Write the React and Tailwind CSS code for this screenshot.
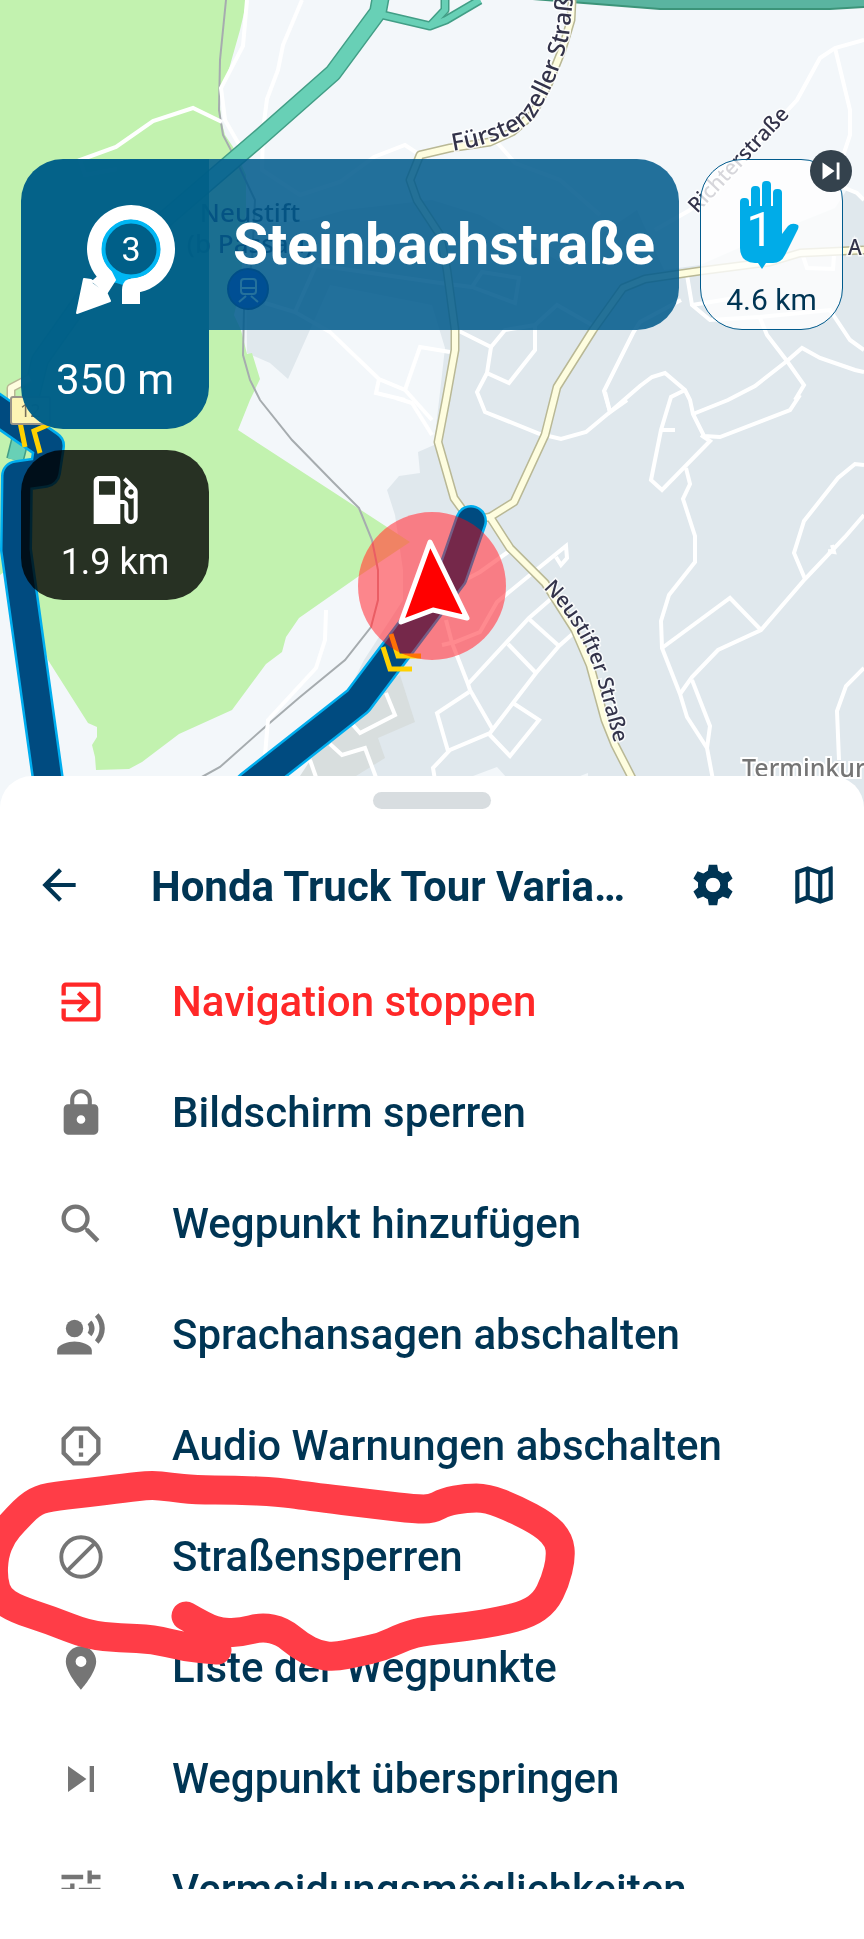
import React from 'react';
import {
  MdArrowBack,
  MdOutlineMap,
  MdExitToApp,
  MdLock,
  MdSearch,
  MdRecordVoiceOver,
  MdReportGmailerrorred,
  MdPlace,
  MdSkipNext,
  MdTune,
  MdLocalGasStation,
} from 'react-icons/md';

const BlockIcon = ({ size = 24, className }) => (
  <svg width={size} height={size} viewBox="0 0 24 24" fill="none" stroke="currentColor" strokeWidth="1.8" className={className}>
    <circle cx="12" cy="12" r="9.1" />
    <path d="M5.6 18.4 18.4 5.6" />
  </svg>
);

const GearIcon = ({ size = 24 }) => (
  <svg width={size} height={size} viewBox="0 0 24 24" fill="currentColor">
    <circle cx="12" cy="12" r="5.3" fill="none" stroke="currentColor" strokeWidth="3.6" />
    {[0, 60, 120, 180, 240, 300].map((angle) => (
      <path key={angle} transform={`rotate(${angle} 12 12)`} d="M10 2.3H14L14.5 5.2 16 6.2 14 8.4H10L8 6.2 9.5 5.2Z" />
    ))}
  </svg>
);

const menuItems = [
  { label: 'Navigation stoppen', icon: MdExitToApp, danger: true },
  { label: 'Bildschirm sperren', icon: MdLock },
  { label: 'Wegpunkt hinzufügen', icon: MdSearch },
  { label: 'Sprachansagen abschalten', icon: MdRecordVoiceOver },
  { label: 'Audio Warnungen abschalten', icon: MdReportGmailerrorred },
  { label: 'Straßensperren', icon: BlockIcon },
  { label: 'Liste der Wegpunkte', icon: MdPlace },
  { label: 'Wegpunkt überspringen', icon: MdSkipNext },
  { label: 'Vermeidungsmöglichkeiten', icon: MdTune },
];

const streets = [
  'M247 0 243 46 221 88 225 120 241 148',
  'M222 122 193 108 153 121 116 147 80 160 85 175 117 169',
  'M302 0 283 45 278 70 267 99 263 130 262 170 300 195 340 182 374 157 405 145 420 155',
  'M265 303 295 312 330 332 379 379 405 390 432 420',
  'M379 379 376 393 405 400',
  'M405 390 420 347 450 352',
  'M295 312 316 265 440 283 472 287 482 272 519 278 515 303 472 287',
  'M495 140 515 163 560 180 600 215',
  'M457 330 491 347 505 330 535 325 557 305 592 325',
  'M535 325 535 350 509 383 487 373 491 347',
  'M487 373 477 392 485 412 540 434 561 439 586 432 610 412 627 400',
  'M605 392 610 412',
  'M864 40 835 48 820 58 797 100 785 113 725 180 690 210 655 230',
  'M835 48 850 110 850 135 840 165 845 188 857 193 864 200',
  'M681 300 640 322 633 333 604 391 610 412 640 386 652 377 665 373 685 390 690 400 693 414 704 436 720 437 790 410 800 395',
  'M685 390 671 397 661 430 651 480 662 490 710 441 701 435',
  'M661 430 675 430',
  'M693 414 728 400 755 386 787 361 802 348 820 358 855 370 864 372',
  'M687 275 692 305 710 320 760 317 830 310 850 340 864 350',
  'M760 318 767 335 787 361 804 385 795 400',
  'M692 305 735 298',
  'M803 256 807 268 833 269 834 256',
  'M686 468 690 484 683 499 695 536 695 562 669 595 661 621 662 648 680 694 687 717 707 748 713 780',
  'M662 648 730 598 761 630',
  'M680 694 692 677 718 650 761 630 805 579 845 537 864 515',
  'M805 579 794 553 804 521 838 478 855 464 864 465',
  'M692 680 710 726 707 748',
  'M828 551 834 552 832 545',
  'M864 668 846 686 837 711 839 760',
  'M508 552 480 572 465 580',
  'M442 645 455 642 480 632 497 602 530 575 566 546 567 558 561 565 556 557',
  'M552 598 529 618 468 684',
  'M529 619 559 646',
  'M508 644 536 673',
  'M577 630 559 646 536 673 513 703 490 733 450 750 433 768 435 780',
  'M513 703 539 720 510 756 489 734',
  'M446 620 452 643 468 684 470 690 493 730',
  'M469 692 437 713 448 751',
  'M326 610 325 640 316 668 268 720 265 755',
  'M386 693 395 715 360 733 353 725',
  'M330 744 342 755 365 748 377 780',
  'M310 760 317 780',
  'M396 398 412 403 432 435',
];

const yellowRoads = [
  'M572 0 571 20 562 50 548 85 532 115 512 132 490 142 450 148 420 155 410 180 417 200 440 235 447 270 455 330 455 350 446 400 438 442 454 498 470 520 490 517 510 548 545 583 575 630 590 665 605 720 615 745 633 780',
  'M864 250 800 253 770 262 700 271 645 279 623 288 593 330 557 387 545 435 514 502 490 517',
  'M11 400 11 388 30 378',
];

const greenRoads = [
  'M383 15 430 26 446 20 480 0',
  'M430 26 445 10 445 0',
];

const routes = [
  'M-20 398 49 446 45 472 17 476 16 550 48 780',
  'M471 521 452 576 358 701 250 786',
];

// Quadratic smoothing through the midpoints of the given points
const smooth = (points) => {
  let d = `M${points[0][0]} ${points[0][1]}`;
  for (let i = 1; i < points.length - 1; i++) {
    const [x, y] = points[i];
    const [nx, ny] = points[i + 1];
    d += ` Q${x} ${y} ${(x + nx) / 2} ${(y + ny) / 2}`;
  }
  const last = points[points.length - 1];
  return `${d} L${last[0]} ${last[1]}`;
};

const markerPoints = [
  [186, 156], [205, 167], [222, 173], [242, 172], [262, 167], [282, 171], [300, 186], [318, 195], [335, 197], [358, 192], [382, 187], [405, 176],
  [425, 171], [465, 167], [501, 161], [528, 154], [545, 142], [555, 122], [561, 98], [559, 80], [545, 65], [515, 49],
  [487, 38], [466, 38], [445, 42], [432, 49], [415, 49], [380, 45], [306, 36], [279, 32], [235, 30], [195, 30], [170, 27], [151, 25],
  [125, 28], [85, 33], [48, 37], [32, 43], [15, 60], [2, 75], [-6, 95], [-7, 120], [-1, 138], [16, 149], [50, 160], [88, 175],
  [120, 178], [153, 179], [184, 187], [217, 190],
];

const MapView = () => (
  <svg viewBox="0 0 864 808" preserveAspectRatio="xMidYMin slice" className="w-full h-full block bg-[#f3f7fa]" role="img" aria-label="Karte">
    <path fill="#e0e8ed" d="M246 225 310 220 345 210 432 200 480 215 560 262 637 210 664 270 700 265 780 230 835 208 848 188 864 200V808H290L364 660 403 600 403 570 395 515 387 490 399 476 420 473 418 452 434 445 445 348 432 305 330 285 288 379 270 363 247 353Z" />
    <path fill="#d8dede" d="M350 700 400 675 415 722 378 738 385 758 356 776H300Z" />
    <path fill="#f3f7fa" d="M473 776 497 767 507 778ZM575 778 588 773V780Z" />
    <path fill="#c2f2af" d="M0 0H247L240 30 227 76 219 93 221 120 225 135 235 150 246 175 246 210 240 290 234 315 241 330 247 354 252 353 260 379 250 400 238 430 410 542 359 576 299 618 286 637 282 652 266 664 232 710 179 734 142 762 129 769 96 770 95 757 92 745 97 737 97 727 88 723 48 660 20 560 0 575Z" />
    <path fill="none" stroke="#a6acaf" strokeWidth="2" d="M226 0 220 60 219 110 223 135 235 158 255 200 252 260 244 310 243 355 250 380 260 400 292 440 333 482 359 508 372 540 378 570 378 600 371 627 345 660 300 697 265 727 220 767 200 778" />

    <g fill="none" stroke="#ffffff" strokeWidth="4">
      {streets.map((d) => <path key={d} d={d} />)}
    </g>

    <g fill="none" strokeLinejoin="round">
      <path stroke="#429e86" strokeWidth="18" d="M382-10 378 12 333 73 257 140 100 275 40 360 15 460" />
      {greenRoads.map((d) => <path key={d} stroke="#429e86" strokeWidth="9" d={d} />)}
      <path stroke="#68d0b6" strokeWidth="15" d="M382-10 378 12 333 73 257 140 100 275 40 360 15 460" />
      {greenRoads.map((d) => <path key={d} stroke="#68d0b6" strokeWidth="6" d={d} />)}
    </g>
    <path fill="#5ab4a0" stroke="#3c9479" strokeWidth="2" d="M520-2 660 9 830 9 866 7V-2Z" />

    <g fill="none" strokeLinejoin="round">
      {yellowRoads.map((d) => <path key={d} stroke="#b9b895" strokeWidth="9" d={d} />)}
      {yellowRoads.map((d) => <path key={d} stroke="#fefddf" strokeWidth="6" d={d} />)}
    </g>

    <defs>
      <path id="fuerstenzeller" d="M453 151 Q512 141 534 118 Q558 82 569 35 L577 -40" />
      <path id="richter" d="M697 214 806 98" />
      <path id="neustifter" d="M543 588 Q583 628 598 682 L619 760" />
    </defs>
    <g fill="#33334a" stroke="#ffffff" strokeOpacity="0.8" strokeWidth="3" paintOrder="stroke" className="font-['Noto_Sans',sans-serif] text-[21px] font-medium">
      <text className="text-[24px]"><textPath href="#fuerstenzeller">Fürstenzeller Straße</textPath></text>
      <text><textPath href="#richter">Richterstraße</textPath></text>
      <text><textPath href="#neustifter">Neustifter Straße</textPath></text>
      <text x="848" y="255">A</text>
    </g>
    <text x="742" y="777" fill="#757575" stroke="#ffffff" strokeWidth="4" paintOrder="stroke" className="font-['Noto_Sans',sans-serif] text-[25px] font-medium">Terminkurier</text>
    <g fill="#1d2c4c" textAnchor="middle" className="font-['Noto_Sans',sans-serif] text-[26px] font-medium">
      <text x="250" y="222">Neustift</text>
      <text x="250" y="253">(b Passau)</text>
    </g>
    <circle cx="248" cy="289" r="20" fill="#0010c8" stroke="#000a70" strokeWidth="2" />
    <g fill="none" stroke="#ffffff" strokeWidth="2">
      <rect x="241" y="279" width="15" height="15" rx="3" />
      <path d="M241 288H256M246 296 239 302M251 296 258 302" />
    </g>

    <circle cx="432" cy="586" r="74" fill="#900000" className="mix-blend-screen" />
    <g fill="none" strokeLinecap="round" strokeLinejoin="round">
      {routes.map((d) => <path key={d} stroke="#00aeef" strokeWidth="32" d={d} />)}
      {routes.map((d) => <path key={d} stroke="#004b80" strokeWidth="27" d={d} />)}
    </g>
    <g fill="none" stroke="#ffd100" strokeWidth="5">
      <path d="M383 647 390 669H412M391 634 398 656H421M20 422 25 447M50 424 34 431 40 453" />
    </g>
    <rect x="11" y="397" width="39" height="27" rx="2" fill="#fdf4b4" stroke="#99958a" strokeWidth="2" />
    <text x="20" y="417" fill="#77705a" className="font-['Noto_Sans',sans-serif] text-[18px]">12</text>

    <circle cx="432" cy="586" r="74" fill="#ff000a" fillOpacity="0.46" />
    <path d="M430 542 467 618 433 610 401 622Z" fill="#ff0000" stroke="#ffffff" strokeWidth="5" strokeLinejoin="round" />
  </svg>
);

const RoundaboutIcon = () => (
  <svg width="106" height="118" viewBox="0 0 106 118" aria-hidden="true">
    <path fill="#00b7f4" d="M38 70 60 76 52 85 42 82Z" />
    <path fill="none" stroke="#ffffff" strokeWidth="15" d="M60 85.5A36.5 36.5 0 1 0 34.2 74.8" />
    <path fill="#ffffff" d="M51 104V90Q51 79 62 78L69 90V104Z" />
    <path fill="#ffffff" stroke="#ffffff" strokeWidth="2" strokeLinejoin="round" d="M28 76 39 70 44 80 35 94 20 83ZM13 79 6 113 39 101 35 92 20 80Z" />
    <circle cx="60" cy="49" r="27.5" fill="#005f88" stroke="#00b7f4" strokeWidth="4" />
    <text x="60" y="61" textAnchor="middle" fill="#ffffff" className="font-[Roboto,sans-serif] text-[34px]">3</text>
  </svg>
);

const HandIcon = () => (
  <svg width="65" height="92" viewBox="0 0 65 92" aria-hidden="true">
    <g fill="#00ace8">
      <rect x="3" y="20" width="9" height="30" rx="4" />
      <rect x="14" y="8" width="9" height="40" rx="4" />
      <rect x="25" y="3" width="9" height="40" rx="4" />
      <rect x="36" y="11" width="9" height="40" rx="4" />
      <path d="M3 28H45V56L51 48Q55 44 61 47Q62 48 61 51L48 77Q44 85 36 85H29L25 91 21 85H18Q3 84 3 70Z" />
    </g>
    <text x="23" y="68" textAnchor="middle" fill="#ffffff" className="font-[Roboto,sans-serif] text-[49px]">1</text>
  </svg>
);

const GuidancePanel = () => (
  <div className="absolute top-[159px] inset-x-[21px] flex items-start text-white">
    <div className="w-[188px] flex flex-col gap-[21px]">
      <div className="h-[270px] rounded-[42px] rounded-tr-none bg-[#005f88]/98 pt-[41px] flex flex-col items-center">
        <div className="self-start ml-[50px]">
          <RoundaboutIcon />
        </div>
        <span className="mt-[38px] text-[42px] leading-[48px]">350 m</span>
      </div>
      <div className="h-[150px] rounded-[42px] bg-black/80 pt-[18px] flex flex-col items-center">
        <MdLocalGasStation size={64} />
        <span className="mt-[6px] text-[36px] leading-[48px]">1.9 km</span>
      </div>
    </div>
    <div className="flex-1 h-[171px] rounded-r-[42px] bg-[#005a8c]/86 flex items-center justify-center">
      <h1 className="text-[57px] leading-[64px] font-bold">Steinbachstraße</h1>
    </div>
    <div className="relative ml-[21px] w-[143px] h-[171px] rounded-[42px] border border-[#005a8c] bg-white/80 text-[#003554] pt-[18px] flex flex-col items-center">
      <div className="pr-1">
        <HandIcon />
      </div>
      <span className="mt-[14px] text-[30px] leading-8">4.6 km</span>
      <button type="button" aria-label="Wegpunkt überspringen" className="absolute -top-[10px] -right-[10px] size-[42px] rounded-full bg-[#34424d] text-white flex items-center justify-center">
        <MdSkipNext size={34} />
      </button>
    </div>
  </div>
);

const MenuSheet = () => (
  <section className="relative -mt-8 flex-1 min-h-0 flex flex-col rounded-t-[32px] bg-white pb-[50px] text-[#003554]">
    <div className="mt-4 mx-auto w-[118px] h-[17px] rounded-full bg-[#d8dde0]"></div>
    <header className="mt-[26px] h-[100px] shrink-0 flex items-center pl-[34px] pr-[25px]">
      <button type="button" aria-label="Zurück"><MdArrowBack size={50} /></button>
      <h2 className="ml-[67px] pt-1 w-[480px] truncate text-[42px] leading-[52px] font-bold">Honda Truck Tour Variante</h2>
      <button type="button" aria-label="Einstellungen" className="ml-auto"><GearIcon size={50} /></button>
      <button type="button" aria-label="Karte" className="ml-[51px]"><MdOutlineMap size={50} /></button>
    </header>
    <ul className="mt-[11px] flex-1 min-h-0 overflow-hidden">
      {menuItems.map(({ label, icon: Icon, danger }) => (
        <li key={label}>
          <button type="button" className={`w-full h-[111px] pl-[55px] flex items-center gap-[65px] text-left text-[42px] leading-[52px] font-medium ${danger ? 'text-[#ff2828]' : ''}`}>
            <Icon size={52} className={danger ? 'shrink-0' : 'shrink-0 text-[#757575]'} />
            <span className="whitespace-nowrap">{label}</span>
          </button>
        </li>
      ))}
    </ul>
  </section>
);

const App = () => {
  return (
    <main className="relative h-screen flex flex-col overflow-hidden bg-white font-[Roboto,sans-serif]">
      <div className="relative h-[808px] shrink-0">
        <MapView />
        <GuidancePanel />
      </div>
      <MenuSheet />

      {/* Hand-drawn marker around the road block entry */}
      <svg width="600" height="220" viewBox="0 0 600 220" className="absolute left-0 top-[1460px] pointer-events-none" aria-hidden="true">
        <path d={smooth(markerPoints)} fill="none" stroke="#ff3d47" strokeWidth="29" strokeLinecap="round" strokeLinejoin="round" />
      </svg>
    </main>
  );
};

export default App;
